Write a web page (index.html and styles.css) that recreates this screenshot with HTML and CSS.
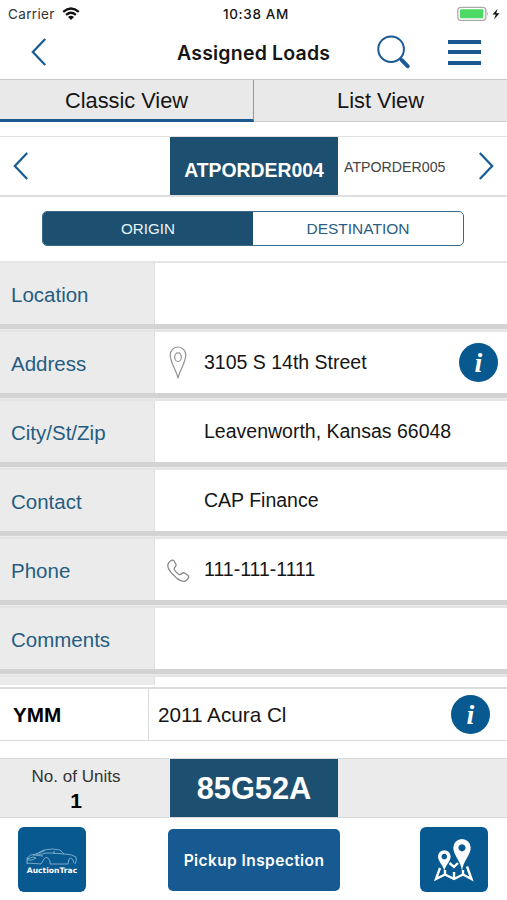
FILE: index.html
```html
<!DOCTYPE html>
<html lang="en">
<head>
<meta charset="utf-8">
<title>Assigned Loads</title>
<link rel="stylesheet" href="styles.css">
</head>
<body>
<div class="app">
  <header class="status">
    <div class="carrier"><span>Carrier</span>
      <svg width="18" height="13" viewBox="0 0 18 13"><g fill="none" stroke="#111" stroke-width="2.3"><path d="M1.2 4.8Q9-1.9 16.8 4.8"/><path d="M4.1 7.9Q9 3.7 13.9 7.9"/></g><path d="M6 10Q9 7.6 12 10L9 13Z" fill="#111"/></svg>
    </div>
    <span class="time">10:38 AM</span>
    <svg class="battery" width="45" height="16" viewBox="0 0 45 16"><rect x=".8" y="1.3" width="28" height="13" rx="3" fill="#fff" stroke="#aaa" stroke-width="1.3"/><rect x="3" y="3.3" width="23.3" height="9" rx="1" fill="#4cd964"/><path d="M30 5.8q1.8 2 0 4z" fill="#aaa"/><path d="M40.7 2.7L35.5 8.5H38.8L37 13.4 42.5 7.3H39.2Z" fill="#111"/></svg>
  </header>
  <nav class="nav">
    <svg class="back" width="16" height="28" viewBox="0 0 16 28"><path d="M14.2 1L1.8 14 14.2 27" fill="none" stroke="#1b5a8c" stroke-width="2.2"/></svg>
    <h1>Assigned Loads</h1>
    <svg class="search" width="34" height="34" viewBox="0 0 34 34"><g fill="none" stroke="#1b5a93"><circle cx="14.1" cy="14.2" r="12.8" stroke-width="2"/><path d="M23 23.4l2 2" stroke-width="2"/><path d="M24.8 25.2L30.6 31.2" stroke-width="4" stroke-linecap="round"/></g></svg>
    <div class="menu"><i></i><i></i><i></i></div>
  </nav>
  <div class="tabs"><div class="tab active">Classic View</div><div class="tab">List View</div></div>
  <section class="orders">
    <svg class="prev" width="16" height="28" viewBox="0 0 16 28"><path d="M14.2 1L1.8 14 14.2 27" fill="none" stroke="#155b94" stroke-width="2.2"/></svg>
    <div class="order current">ATPORDER004</div>
    <div class="order next-order">ATPORDER005</div>
    <svg class="next" width="16" height="28" viewBox="0 0 16 28"><path d="M1.8 1L14.2 14 1.8 27" fill="none" stroke="#155b94" stroke-width="2.2"/></svg>
  </section>
  <div class="segment"><div class="on">ORIGIN</div><div>DESTINATION</div></div>
  <main class="details">
    <div class="row"><div class="label">Location</div><div class="value"></div></div>
    <div class="row"><div class="label">Address</div><div class="value">
      <svg class="icon" width="18" height="34" viewBox="0 0 18 34"><g fill="none" stroke="#919191" stroke-width="1.2"><path d="M9 32.5C8.2 26 1.2 16.5 1.2 9A7.8 8 0 0 1 16.8 9C16.8 16.5 9.8 26 9 32.5Z"/><ellipse cx="9" cy="11.2" rx="3.3" ry="4.3"/></g></svg>
      <span class="address">3105 S 14th Street</span><span class="info">i</span></div></div>
    <div class="row"><div class="label city">City/St/Zip</div><div class="value"><span class="locality">Leavenworth, Kansas 66048</span></div></div>
    <div class="row"><div class="label">Contact</div><div class="value"><span class="contact">CAP Finance</span></div></div>
    <div class="row"><div class="label">Phone</div><div class="value">
      <svg class="icon phone" width="24" height="24" viewBox="0 0 24 24"><path d="M3.2 3.2C5.5.7 7 .8 8 1.8L10 5.5C10.5 7 9.5 7.8 8.5 8.7 7.5 9.7 8 10.5 9.5 12.4L12.4 15C14 16.2 14.8 15.7 15.8 14.5 16.7 13.5 17.8 13.5 19 14.3L21.8 16.3C23.5 17.7 22.5 19.2 20.5 21.3 18.2 23.6 15 22.3 11.2 19.6L5.2 13.7C2.2 10 .5 6 3.2 3.2Z" fill="none" stroke="#888" stroke-width="1.3"/></svg>
      <span class="number">111-111-1111</span></div></div>
    <div class="row"><div class="label">Comments</div><div class="value"></div></div>
    <div class="row"><div class="label"></div><div class="value"></div></div>
  </main>
  <section class="ymm"><b>YMM</b><div><span>2011 Acura Cl</span><span class="info">i</span></div></section>
  <section class="units"><div class="count"><span>No. of Units</span><b>1</b></div><div class="code"><span>85G52A</span></div></section>
  <footer class="footer">
    <div class="tile brand">
      <svg width="52" height="18" viewBox="0 0 52 18"><g fill="none" stroke="#a9c9e2" stroke-width=".7"><path d="M1 16L1 10Q4 6 10 6L18 2Q27 0 34 2L38 6Q46 6 50 9Q51 13 49 16"/><path d="M10 6Q16 7 20 5L26 5 38 6"/><path d="M1 11L7 9 10 10 6 12 1 12M1 15L15 16 18 11Q21 7 24 13L24 16 42 16 43 11Q46 8 48 15"/><path d="M13 5L19 2.5M28 6L28 3M7 7L17 8"/></g></svg>
      <span>AuctionTrac</span>
    </div>
    <div class="button">Pickup Inspection</div>
    <div class="tile">
      <svg width="40" height="44" viewBox="0 0 40 44"><path d="M6 30L2 41 11 36.5 20 41 29 36.5 37.5 41 33 28.5" fill="none" stroke="#fff" stroke-width="2.4"/><path d="M11 32V37M20 34V41M29 32V37M15.5 25L20 28.8 24 25" fill="none" stroke="#fff" stroke-width="2.4"/><path fill="#fff" fill-rule="evenodd" d="M10.3 33C9.2 27 4 23.5 4 18.5a6.3 6.3 0 0 1 12.6 0C16.6 23.5 11.4 27 10.3 33ZM10.3 15.8a2.8 2.8 0 1 0 .01 0ZM28 33C27 23 19.3 17 19.3 9.7a8.7 8.7 0 0 1 17.4 0C36.7 17 29 23 28 33ZM28 6.2a3.6 3.6 0 1 0 .01 0Z"/></svg>
    </div>
  </footer>
</div>
</body>
</html>
```
FILE: styles.css
```css
* { box-sizing: border-box; }
body { margin: 0; background: #fff; color: #151515; font-family: "Liberation Sans", Arial, sans-serif; }
.app { width: 507px; height: 900px; display: flex; flex-direction: column; overflow: hidden; }
.app > * { flex: none; }
svg { display: block; flex: none; }
.status { height: 28px; display: grid; grid-template-columns: 1fr auto 1fr; align-items: center; padding: 0 5px 0 8px; font-family: Inter, sans-serif; font-size: 13.5px; }
.carrier { display: flex; align-items: center; gap: 7px; margin-top: -1px; color: #333; letter-spacing: .35px; }
.time { margin-left: 2px; font-weight: 500; letter-spacing: .65px; }
.battery { justify-self: end; margin-top: -1px; }
.nav { height: 51px; display: flex; align-items: center; padding: 0 26px 4px 31px; }
.nav h1 { margin: 2px 0 0 130px; width: 154px; font: 600 19.5px Inter, sans-serif; letter-spacing: .2px; white-space: nowrap; }
.search { margin: 1px 0 0 46px; }
.menu { margin: 1px 0 0 auto; width: 33px; height: 25px; display: flex; flex-direction: column; justify-content: space-between; }
.menu i { height: 4px; background: #1b5790; }
.tabs { height: 43px; display: grid; grid-template-columns: 254px 1fr; background: #e9e9e9; border-top: 1px solid #c8c8c8; }
.tab { display: flex; align-items: center; justify-content: center; font-size: 21.8px; border-bottom: 1px solid #ccc; }
.active { border-right: 1px solid #999; border-bottom: 3px solid #1b5a8f; padding-top: 2px; }
.orders { height: 61px; margin-top: 14px; border: solid #e0e0e0; border-width: 1px 0 2px; display: flex; align-items: center; }
.prev { margin-left: 13px; }
.order { height: 58px; display: flex; align-items: center; }
.current { width: 168px; margin-left: 141px; justify-content: center; padding-top: 8px; background: #1d5070; color: #fff; font-size: 19.4px; font-weight: bold; }
.next-order { width: 109px; margin-left: 6px; padding-top: 2px; font-size: 14.2px; color: #444; }
.next { margin-left: 25px; }
.segment { width: 422px; height: 35px; margin: 14px 0 0 42px; display: grid; grid-template-columns: 1fr 1fr; border: 1px solid #3a6a8b; border-radius: 5px; overflow: hidden; color: #2b5e82; font-size: 15.5px; }
.segment div { display: flex; align-items: center; justify-content: center; }
.segment .on { background: #1d5070; color: #e9f4fa; font-size: 15.2px; }
.details { height: 424px; margin-top: 15px; overflow: hidden; background: #ebebeb; }
.row { height: 68px; margin-bottom: 1px; display: grid; grid-template-columns: 155px 1fr; border-top: 2px solid #e5e5e5; border-bottom: 5px solid #d3d3d3; }
.label { background: #ebebeb; border-right: 1px solid #dedede; padding: 2px 0 0 11px; display: flex; align-items: center; color: #255d82; font-size: 20.5px; }
.value { background: #fff; display: flex; align-items: center; padding-left: 49px; font-size: 19.5px; }
.icon { margin-left: -35px; margin-right: 17px; }
.phone { margin-left: -38px; margin-right: 14px; margin-top: 2px; }
.info { width: 39px; height: 39px; margin-left: auto; margin-right: 9px; border-radius: 50%; background: #075990; color: #fff; display: flex; align-items: center; justify-content: center; font: italic bold 28px "Liberation Serif", serif; }
.ymm { height: 54px; margin-top: 2px; border: solid #dcdcdc; border-width: 2px 0 1px; display: grid; grid-template-columns: 148px 1fr; font-size: 20.7px; }
.ymm b { padding-left: 13px; align-self: center; color: #000; }
.ymm div { border-left: 1px solid #ddd; display: flex; align-items: center; padding-left: 9px; }
.ymm .info { margin-right: 17px; }
.units { height: 60px; margin-top: 17px; background: #ebebeb; border: solid #dadada; border-width: 1px 0; display: grid; grid-template-columns: 170px 168px 1fr; }
.count { display: flex; flex-direction: column; align-items: center; padding: 8px 18px 0 0; font-size: 17px; line-height: 19px; color: #333; }
.count b { font-size: 21px; line-height: 30px; color: #000; }
.code { background: #1d5070; color: #fff; display: flex; align-items: center; justify-content: center; padding-top: 2px; font-size: 30.8px; font-weight: bold; }
.footer { height: 82px; padding: 9px 19px 0 18px; display: flex; }
.tile { width: 68px; height: 65px; border-radius: 6px; background: #075990; display: flex; align-items: center; justify-content: center; }
.brand { flex-direction: column; color: #fff; font: bold 7.6px "DejaVu Sans", sans-serif; padding-top: 3px; }
.button { width: 172px; height: 62px; margin: 2px 80px 0 82px; border-radius: 5px; background: #165a91; color: #fff; display: flex; align-items: center; justify-content: center; font: 600 15.5px Inter, sans-serif; letter-spacing: .42px; }
```
